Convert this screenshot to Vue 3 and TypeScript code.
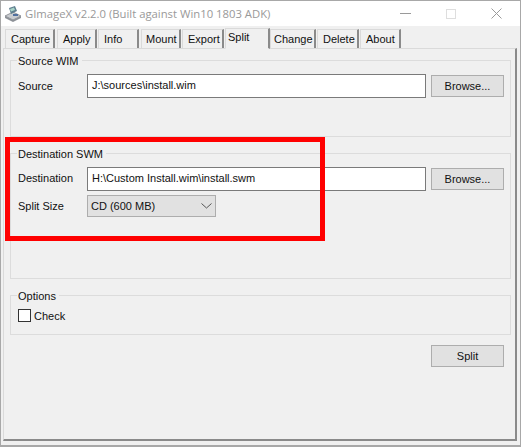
<script setup lang="ts">
const tabs = [
  { label: 'Capture', width: 50, gap: 2, pad: 5 },
  { label: 'Apply', width: 40, gap: 1, pad: 5 },
  { label: 'Info', width: 41, gap: 2, pad: 5 },
  { label: 'Mount', width: 40, gap: 1, pad: 4 },
  { label: 'Export', width: 42, gap: 1, pad: 5 },
  { label: 'Split', width: 45, gap: 0, pad: 2, active: true },
  { label: 'Change', width: 46, gap: 1, pad: 3 },
  { label: 'Delete', width: 42, gap: 1, pad: 5 },
  { label: 'About', width: 41, gap: 0, pad: 5 },
]
</script>

<template>
  <div class="window">
    <header class="titlebar">
      <svg class="app-icon" width="18" height="18" viewBox="0 0 18 18">
        <path d="M1 11 L9 7 L17 11 L9 15 Z" fill="#c9ccd0" stroke="#7d8288" stroke-width="0.8" />
        <path d="M1 11 V13 L9 17 L17 13 V11 L9 15 Z" fill="#8d9197" />
        <path d="M5 3 L11 1 L13 6 L7 9 Z" fill="#5f7f8f" />
        <path d="M6 4 L10 2.6 L11 5 L7 6.6 Z" fill="#a8d4c8" />
        <rect x="9" y="9" width="5" height="2" fill="#4f6f9f" />
      </svg>
      <span class="title">GImageX v2.2.0 (Built against Win10 1803 ADK)</span>
      <div class="controls">
        <svg width="11" height="11" viewBox="0 0 11 11"><path d="M0 5.5 H11" stroke="#9a9a9a" /></svg>
        <svg width="10" height="10" viewBox="0 0 10 10"><rect x="0.5" y="0.5" width="9" height="9" fill="none" stroke="#dedede" /></svg>
        <svg width="11" height="11" viewBox="0 0 11 11"><path d="M0.5 0.5 L10.5 10.5 M10.5 0.5 L0.5 10.5" stroke="#9a9a9a" /></svg>
      </div>
    </header>

    <div class="body">
      <nav class="tabs">
        <div
          v-for="t in tabs"
          :key="t.label"
          class="tab"
          :class="{ active: t.active }"
          :style="{ width: t.width + 'px', marginRight: t.gap + 'px', paddingLeft: t.pad + 'px' }"
        >{{ t.label }}</div>
      </nav>

      <main class="page">
        <fieldset class="group source">
          <legend>Source WIM</legend>
          <div class="row">
            <label>Source</label>
            <div class="input">J:\sources\install.wim</div>
            <button class="btn">Browse...</button>
          </div>
        </fieldset>

        <fieldset class="group dest">
          <legend>Destination SWM</legend>
          <div class="row">
            <label class="raised">Destination</label>
            <div class="input">H:\Custom Install.wim\install.swm</div>
            <button class="btn">Browse...</button>
          </div>
          <div class="row combo-row">
            <label>Split Size</label>
            <div class="combo">
              <span>CD (600 MB)</span>
              <svg width="11" height="6" viewBox="0 0 11 6"><path d="M0.5 0.5 L5.5 5 L10.5 0.5" fill="none" stroke="#555" /></svg>
            </div>
          </div>
        </fieldset>

        <fieldset class="group options">
          <legend>Options</legend>
          <div class="check-row">
            <span class="checkbox"></span>
            <span>Check</span>
          </div>
        </fieldset>

        <div class="actions">
          <button class="btn">Split</button>
        </div>
      </main>
    </div>

    <div class="highlight"></div>
  </div>
</template>

<style>
html, body { margin: 0; padding: 0; background: #f0f0f0; }
</style>

<style scoped>
.window {
  position: relative;
  box-sizing: border-box;
  width: 521px;
  height: 447px;
  background: #f0f0f0;
  border: 1px solid #a8a8a8;
  border-bottom-width: 2px;
  font-family: "Liberation Sans", Arial, sans-serif;
  font-size: 11px;
  color: #111;
  overflow: hidden;
}
.titlebar {
  display: flex;
  align-items: center;
  height: 25px;
  background: #fff;
  padding-left: 3px;
}
.app-icon { margin-right: 3px; }
.title {
  font-family: "Open Sans", sans-serif;
  font-size: 11.3px;
  color: #999;
}
.controls {
  margin-left: auto;
  display: flex;
  align-items: center;
  gap: 35px;
  padding-right: 18px;
}
.body {
  padding: 2px 2px 0 2px;
}
.tabs {
  display: flex;
  align-items: flex-end;
  height: 20px;
  padding-left: 2px;
  position: relative;
  z-index: 1;
}
.tab {
  box-sizing: border-box;
  height: 19px;
  display: flex;
  align-items: center;
  background: #f0f0f0;
  border: 1px solid #dadada;
  border-right: 2px solid #8a8a8a;
  border-bottom: none;
}
.tab.active {
  height: 21px;
  padding-bottom: 3px;
  border-bottom: 1px solid #f0f0f0;
  margin-bottom: -1px;
}
.page {
  box-sizing: border-box;
  width: 514px;
  height: 393px;
  border: 1px solid #dadada;
  border-right: 2px solid #8a8a8a;
  border-bottom: 2px solid #8a8a8a;
  padding: 5px 6px 0 6px;
  position: relative;
}
.group {
  margin: -1px 0 0 0;
  padding: 0 0 0 7px;
  border: 1px solid #dcdcdc;
  min-width: 0;
  width: 501px;
  box-sizing: border-box;
}
.group legend {
  padding: 2px 3px 0 1px;
  margin-left: -1px;
  line-height: 13px;
}
.source { height: 84px; margin-bottom: 10px; }
.dest { height: 133px; margin-bottom: 10px; }
.options { height: 47px; }
.row {
  display: flex;
  align-items: center;
  height: 24px;
  margin-top: 6px;
}
.combo-row { margin-top: 4px; height: 22px; }
.row label { width: 69px; flex: none; }
.row label.raised { padding-bottom: 2px; }
.input {
  box-sizing: border-box;
  flex: none;
  width: 339px;
  height: 24px;
  background: #fff;
  border: 1px solid #7a7a7a;
  line-height: 21px;
  padding-left: 4px;
  white-space: nowrap;
}
.btn {
  box-sizing: border-box;
  flex: none;
  width: 73px;
  height: 22px;
  margin: 0 0 0 5px;
  padding: 0;
  background: #e1e1e1;
  border: 1px solid #adadad;
  font: inherit;
  color: inherit;
}
.combo {
  box-sizing: border-box;
  flex: none;
  width: 129px;
  height: 22px;
  display: flex;
  align-items: center;
  justify-content: space-between;
  background: #e1e1e1;
  border: 1px solid #adadad;
  padding: 0 3px 0 3px;
}
.check-row {
  display: flex;
  align-items: center;
  gap: 3px;
  margin-top: 6px;
}
.checkbox {
  box-sizing: border-box;
  width: 13px;
  height: 13px;
  background: #fff;
  border: 1px solid #333;
}
.actions {
  display: flex;
  justify-content: flex-end;
  margin-top: 10px;
  width: 494px;
}
.highlight {
  position: absolute;
  left: 4px;
  top: 136px;
  width: 320px;
  height: 104px;
  box-sizing: border-box;
  border: 5px solid #f00;
  pointer-events: none;
}
</style>
